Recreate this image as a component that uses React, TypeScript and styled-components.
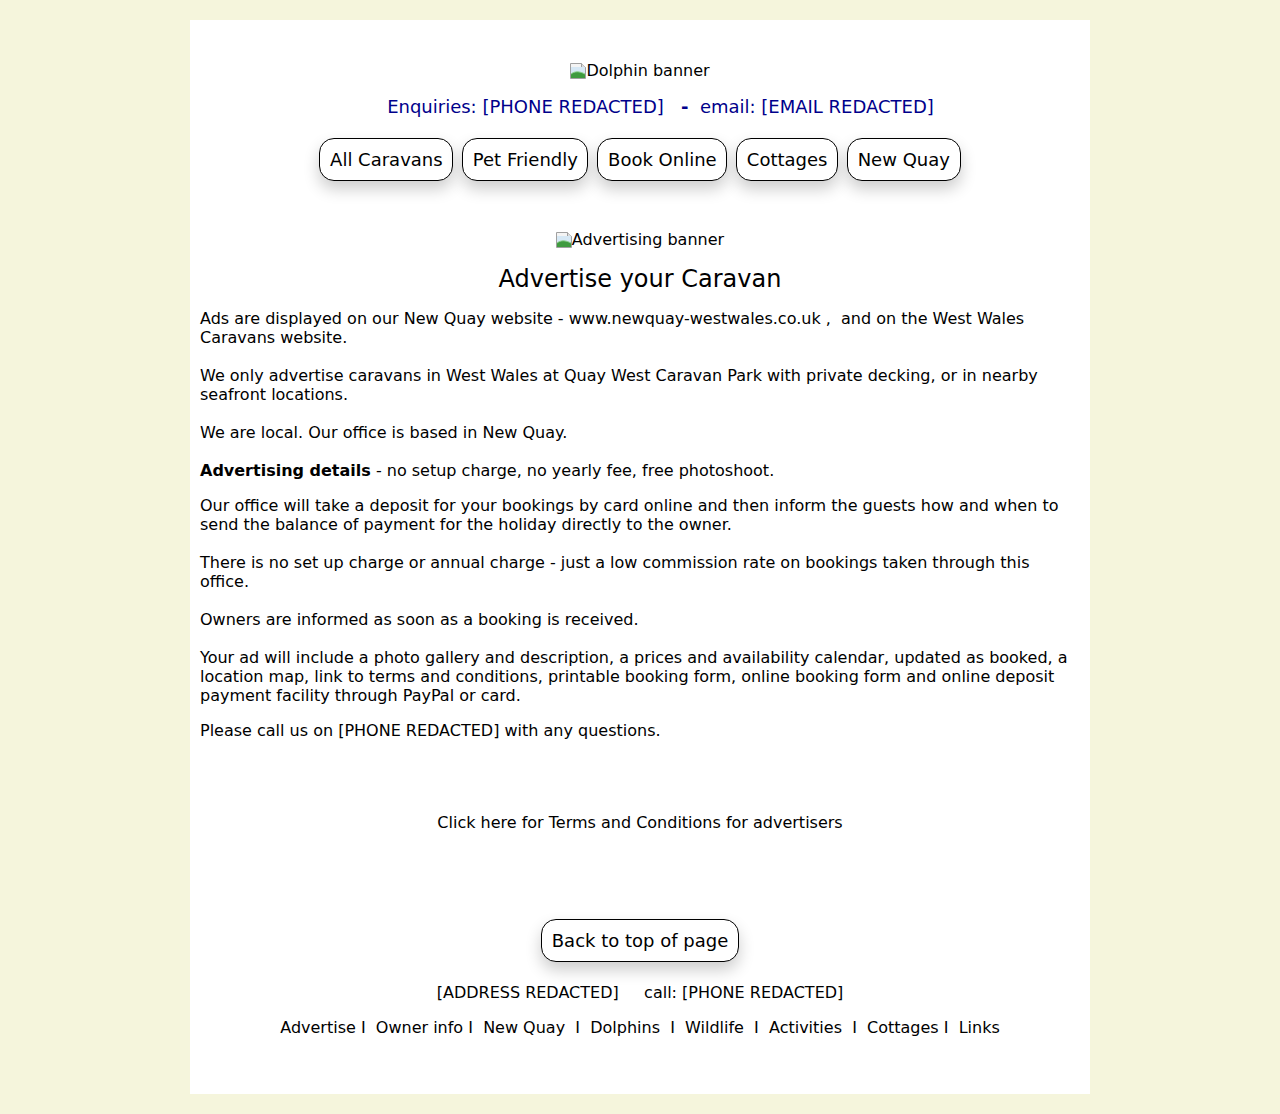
import React from "react";
import styled, { createGlobalStyle } from "styled-components";

const GlobalStyle = createGlobalStyle`
  html, body {
    margin: 0;
    padding: 0;
    background: #f5f5dc;
  }
  body {
    font-family: "DejaVu Sans", Verdana, sans-serif;
    font-size: 16px;
    color: #000;
  }
`;

const Page = styled.div`
  width: 880px;
  margin: 20px auto;
  padding: 10px 10px 57px;
  background: #ffffff;
`;

const Banner = styled.div<{ $top: number }>`
  margin-top: ${(p) => p.$top}px;
  display: flex;
  justify-content: center;
  align-items: center;
  height: 19px;
  line-height: 19px;
  font-size: 16px;
`;

const BrokenIcon = styled.svg`
  width: 16px;
  height: 16px;
  flex: none;
`;

const Contact = styled.div`
  margin-top: 16px;
  padding-left: 41px;
  text-align: center;
  font-size: 18px;
  line-height: 21px;
  color: #00008b;
  white-space: pre;
`;

const Dash = styled.b`
  font-weight: bold;
`;

const Nav = styled.nav`
  margin-top: 21px;
  display: flex;
  justify-content: center;
  gap: 9px;
`;

const PillButton = styled.a`
  display: inline-block;
  padding: 10px 9.6px;
  border: 1px solid #000;
  border-radius: 15px;
  background: #fff;
  color: #000;
  font-size: 18px;
  line-height: 21px;
  text-decoration: none;
  box-shadow: 0 8px 16px 0 rgba(0, 0, 0, 0.2);
  cursor: pointer;
`;

const Heading = styled.h2`
  margin: 16px 0 0;
  text-align: center;
  font-size: 24px;
  line-height: 28px;
  font-weight: normal;
`;

const Para = styled.p`
  margin: 16px 0 0;
  font-size: 16px;
  line-height: 19px;
`;

const Centered = styled.div<{ $top: number }>`
  margin-top: ${(p) => p.$top}px;
  text-align: center;
  font-size: 16px;
  line-height: 19px;
  white-space: pre;
`;

const PlainLink = styled.a`
  color: #000;
  text-decoration: none;
`;

const BackRow = styled.div`
  margin-top: 87px;
  display: flex;
  justify-content: center;
`;

const Broken = ({ alt, top }: { alt: string; top: number }) => (
  <Banner $top={top}>
    <BrokenIcon viewBox="0 0 16 16">
      <path d="M0.5 0.5h11l4 4v11h-15z" fill="#f4f4f4" stroke="#a0a0a0" />
      <path d="M11.5 0.5v4h4" fill="#dcdcdc" stroke="#a0a0a0" />
      <rect x="1" y="4" width="14" height="11" fill="#d6e8f5" />
      <path d="M1 15v-4c4-3 8-3 14 0v4z" fill="#3f9b3f" />
      <path d="M1 11c4-3 8-3 14 0" fill="none" stroke="#8fd08f" strokeWidth="1" />
    </BrokenIcon>
    <span>{alt}</span>
  </Banner>
);

const navItems = ["All Caravans", "Pet Friendly", "Book Online", "Cottages", "New Quay"];

export default function App() {
  return (
    <>
      <GlobalStyle />
      <Page>
        <Broken alt="Dolphin banner" top={31} />
        <Contact>
          {"Enquiries: [PHONE REDACTED]   "}
          <Dash>-</Dash>
          {"  email: [EMAIL REDACTED]"}
        </Contact>
        <Nav>
          {navItems.map((n) => (
            <PillButton key={n}>{n}</PillButton>
          ))}
        </Nav>
        <Broken alt="Advertising banner" top={49} />
        <Heading>Advertise your Caravan</Heading>
        <Para>
          Ads are displayed on our New Quay website - www.newquay-westwales.co.uk ,&nbsp; and on the West
          Wales Caravans website.
          <br />
          <br />
          We only advertise caravans in West Wales at Quay West Caravan Park with private decking, or in
          nearby seafront locations.
          <br />
          <br />
          We are local. Our office is based in New Quay.
          <br />
          <br />
          <b>Advertising details</b> - no setup charge, no yearly fee, free photoshoot.
        </Para>
        <Para>
          Our office will take a deposit for your bookings by card online and then inform the guests how and
          when to send the balance of payment for the holiday directly to the owner.
          <br />
          <br />
          There is no set up charge or annual charge - just a low commission rate on bookings taken through
          this office.
          <br />
          <br />
          Owners are informed as soon as a booking is received.
          <br />
          <br />
          Your ad will include a photo gallery and description, a prices and availability calendar, updated
          as booked, a location map, link to terms and conditions, printable booking form, online booking
          form and online deposit payment facility through PayPal or card.
        </Para>
        <Para>Please call us on [PHONE REDACTED] with any questions.</Para>
        <Centered $top={73}>
          <PlainLink>Click here for Terms and Conditions for advertisers</PlainLink>
        </Centered>
        <BackRow>
          <PillButton>Back to top of page</PillButton>
        </BackRow>
        <Centered $top={21}>{"[ADDRESS REDACTED]     call: [PHONE REDACTED]"}</Centered>
        <Centered $top={16}>
          {"Advertise I  Owner info I  New Quay  I  Dolphins  I  Wildlife  I  Activities  I  Cottages I  Links"}
        </Centered>
      </Page>
    </>
  );
}
